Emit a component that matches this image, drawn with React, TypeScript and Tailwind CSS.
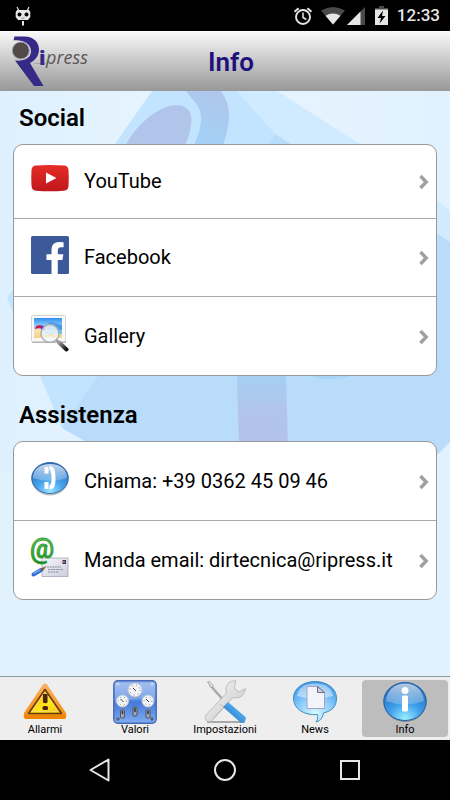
import { useState } from 'react';
import type { ReactNode } from 'react';
import { FaFacebookF } from 'react-icons/fa';

function StatusBar() {
    return (
        <div className="flex items-center justify-between h-[31px] pl-[15px] pr-[10px] bg-black text-[#e6e6e6]">
            <svg width="16" height="20" viewBox="0 0 16 20" className="mt-px" aria-hidden="true">
                <path d="M2 1l2 4M14 1l-2 4" stroke="#e6e6e6" strokeWidth="1.2" />
                <path d="M2 4h12l1.3 2v5L13 14H3L.7 11V6z" fill="#e6e6e6" />
                <circle cx="4.5" cy="8.5" r="2" fill="#000" />
                <circle cx="11.5" cy="8.5" r="2" fill="#000" />
                <path d="M6.5 12.2h3" stroke="#888" />
                <path d="M8 15v4.500" stroke="#e6e6e6" strokeWidth="2" />
            </svg>
            <div className="flex items-center">
                <svg width="20" height="20" viewBox="0 0 20 20" fill="none" stroke="#e6e6e6" aria-hidden="true">
                    <circle cx="10" cy="11" r="7" strokeWidth="1.900" />
                    <path d="M10 6.500V11.500l3.300 2" strokeWidth="1.500" />
                    <path d="M1.500 5.800L5.600 2.200M18.500 5.800l-4.100-3.600" strokeWidth="1.900" />
                </svg>
                <svg width="24" height="18" viewBox="0 0 24 18" className="ml-2" aria-hidden="true">
                    <path d="M12 17.500L0 3.500Q12-3.500 24 3.500z" fill="#4a4a4a" />
                    <path d="M12 17.500L4.500 8.800Q12 4 19.500 8.800z" fill="#e6e6e6" />
                </svg>
                <svg width="18" height="18" viewBox="0 0 18 18" className="ml-[2px]" aria-hidden="true">
                    <path d="M0 18L18 0v18z" fill="#4a4a4a" />
                    <path d="M0 18L13.500 4.500V18z" fill="#e6e6e6" />
                </svg>
                <svg width="13" height="19" viewBox="0 0 13 19" className="ml-[10px]" aria-hidden="true">
                    <path d="M4 0h5v2h4v3H0V2h4z" fill="#4a4a4a" />
                    <path d="M0 3.500h13V19H0z" fill="#e6e6e6" />
                    <path d="M8 4.500L2.500 12H6l-1.500 5.500L10.500 10H7z" fill="#000" />
                </svg>
                <span className="ml-[9px] text-[17px] leading-[31px] font-medium">12:33</span>
            </div>
        </div>
    );
}

function Logo() {
    return (
        <svg width="80" height="52" viewBox="0 0 80 52" role="img" aria-label="Ripress">
            <path
                d="M2.500.5H12C22.500.5 27 7 27 13.500C27 20 23 24.500 18 27L31.500 50H22L3 24.500C12 25.500 19.500 22 19 14.500C18.500 7.500 10.500 3.500 1.500 4.500z"
                fill="#352a86"
            />
            <circle cx="8.800" cy="14.500" r="8.500" fill="#514a49" stroke="#a4a0b5" strokeWidth="1" />
            <path d="M22 27.500h12" stroke="#a9a6b4" />
            <text x="27" y="29" fontSize="20" fontWeight="800" fill="#352a86" fontFamily="Open Sans, sans-serif">i</text>
            <text x="34" y="28" fontSize="18" fontStyle="italic" fontWeight="400" fill="#5b5655" fontFamily="Open Sans, sans-serif">press</text>
        </svg>
    );
}

function Backdrop() {
    return (
        <svg
            className="absolute inset-0 w-full h-full"
            viewBox="0 0 450 585"
            preserveAspectRatio="xMidYMin slice"
            aria-hidden="true"
        >
            <defs>
                <linearGradient id="sky" x1="0" y1="0" x2="1" y2="0">
                    <stop offset="0" stopColor="#def0fe" />
                    <stop offset=".4" stopColor="#e7f5ff" />
                    <stop offset="1" stopColor="#e1f1fe" />
                </linearGradient>
                <linearGradient id="violet" x1="0" y1="0" x2="0" y2="1">
                    <stop offset="0" stopColor="#a4cff3" />
                    <stop offset=".5" stopColor="#b2c4ea" />
                    <stop offset="1" stopColor="#b1c3e9" />
                </linearGradient>
                <linearGradient id="ring" x1=".7" y1="0" x2=".3" y2="1">
                    <stop offset="0" stopColor="#b1c5eb" />
                    <stop offset=".8" stopColor="#a3d0f4" />
                </linearGradient>
            </defs>
            <path d="M0 0h450v585H0z" fill="#e1f1fe" />
            <path d="M0 0h450v380H0z" fill="url(#sky)" />
            <path d="M237 0h40l83 53 77 56 13 11v230H237z" fill="#d0ebff" />
            <path d="M152 0h85l38 43 62 307H85L62 337 40 285 7 207z" fill="#c2e4fe" />
            <path d="M98 285L268 54l7-11 162 100 13 8v200l-30 30H120L85 350 62 337z" fill="#b9dcfb" />
            <path d="M186 0h35q9 12 8 28-1 12-6 26h-29q7-14 7-26 0-8-4-14z" fill="url(#ring)" />
            <path d="M126 54C136 34 158 15 176 14c12 0 17 8 15 20q-1 10-6 20z" fill="#b1c4e9" />
            <path d="M237 285h49l2 70h-49z" fill="url(#violet)" />
            <ellipse cx="330" cy="280" rx="26" ry="8" fill="#a7d5f8" />
        </svg>
    );
}

function YoutubeIcon() {
    return (
        <svg width="38" height="38" viewBox="0 0 38 38" aria-hidden="true">
            <defs>
                <linearGradient id="yt" x1="0" y1="0" x2="0" y2="1">
                    <stop offset="0" stopColor="#e52d27" />
                    <stop offset="1" stopColor="#bf171d" />
                </linearGradient>
            </defs>
            <path d="M5 5.500Q19 4.500 33 5.500Q37 5.500 37.500 10Q38 18 37.500 26Q37 30.500 33 30.700Q19 31.700 5 30.700Q1 30.500.5 26Q0 18 .5 10Q1 5.500 5 5.500z" fill="url(#yt)" />
            <path d="M15 12.500l10.500 5.500L15 23.500z" fill="#fff" />
        </svg>
    );
}

function FacebookIcon() {
    return (
        <svg width="38" height="38" viewBox="0 0 38 38" aria-hidden="true">
            <rect width="38" height="38" rx="1.500" fill="#3c5a99" />
            <FaFacebookF x="8" y="6" size={32} color="#fff" />
        </svg>
    );
}

function GalleryIcon() {
    return (
        <svg width="38" height="38" viewBox="0 0 38 38" aria-hidden="true">
            <defs>
                <linearGradient id="photo" x1="0" y1="0" x2="0" y2="1">
                    <stop offset="0" stopColor="#2f8ff0" />
                    <stop offset=".45" stopColor="#9bd8fa" />
                    <stop offset=".6" stopColor="#f8e4b4" />
                    <stop offset="1" stopColor="#f7d083" />
                </linearGradient>
                <linearGradient id="handle" x1="0" y1="0" x2="1" y2="1">
                    <stop offset="0" stopColor="#9a9a9a" />
                    <stop offset="1" stopColor="#111" />
                </linearGradient>
            </defs>
            <rect x="1" y="2" width="34" height="26" rx="1" fill="#b5b5b5" />
            <rect x=".5" y=".5" width="34" height="26" rx="1" fill="#fafafa" stroke="#d4d4d4" />
            <rect x="3" y="3" width="28" height="20" fill="url(#photo)" />
            <path d="M16 10c3-4 6-3 8-2s4 1 7 2v5H16z" fill="#4b9ce8" />
            <path d="M13 15h18v4H13z" fill="#72c5f3" />
            <path d="M4 14c0-3 3-4.500 6-3.500s4 2 3 4.500c-3-2-6-2-9-1z" fill="#dc1745" />
            <path d="M10 10.500c4 0 6 3 4 5l-4-1z" fill="#6128b4" />
            <circle cx="19" cy="18.500" r="9" fill="#f4f8f9" fillOpacity=".8" stroke="#a9adb0" strokeWidth="1.400" />
            <path d="M14 22q5-5 10 0" stroke="#f6d9a0" fill="none" />
            <path d="M25.500 25l3 3" stroke="#8c8c8c" strokeWidth="2" />
            <path d="M28 27.500l7.500 7" stroke="url(#handle)" strokeWidth="4" strokeLinecap="round" />
        </svg>
    );
}

function PhoneIcon() {
    return (
        <svg width="38" height="38" viewBox="0 0 38 38" aria-hidden="true">
            <defs>
                <radialGradient id="orb" cx=".5" cy=".95" r=".9">
                    <stop offset="0" stopColor="#9ee6ff" />
                    <stop offset=".4" stopColor="#4aa6ee" />
                    <stop offset="1" stopColor="#2368b8" />
                </radialGradient>
                <linearGradient id="gloss" x1="0" y1="0" x2="0" y2="1">
                    <stop offset="0" stopColor="#fff" stopOpacity=".75" />
                    <stop offset="1" stopColor="#fff" stopOpacity=".2" />
                </linearGradient>
            </defs>
            <ellipse cx="19" cy="19.500" rx="18.500" ry="16" fill="#b8bfc8" />
            <ellipse cx="19" cy="18" rx="18.300" ry="15.500" fill="url(#orb)" stroke="#2a5c9d" strokeWidth=".8" />
            <path d="M2 18C2 9 9 4 19 4s17 5 17 14q-17 6-34 0z" fill="url(#gloss)" />
            <path d="M13.500 7h4v6.500h-4zM18.500 6c5 0 6 5 6 12s-1 11.500-6 11.500v-4c1.500-.5 2-3 2-7.500s-.5-7.500-2-8zM13.500 22h4v7h-4z" fill="#fff" />
        </svg>
    );
}

function MailIcon() {
    return (
        <svg width="38" height="38" viewBox="0 0 38 38" className="overflow-visible" aria-hidden="true">
            <defs>
                <linearGradient id="card" x1="0" y1="0" x2="1" y2="1">
                    <stop offset="0" stopColor="#f6f6fb" />
                    <stop offset="1" stopColor="#cbcddd" />
                </linearGradient>
                <linearGradient id="leaf" x1="0" y1="0" x2="0" y2="1">
                    <stop offset="0" stopColor="#7bd05f" />
                    <stop offset="1" stopColor="#138a1f" />
                </linearGradient>
            </defs>
            <rect x="11" y="19" width="26" height="18.500" fill="url(#card)" stroke="#a5a7b6" strokeWidth=".8" />
            <rect x="31.500" y="21" width="3.500" height="4" fill="#26367c" />
            <rect x="32" y="22" width="2" height="2" fill="#e2612c" />
            <path d="M16 28h14M17 30.500h15M17 33h11" stroke="#77798a" strokeWidth=".8" strokeDasharray="2 .6" />
            <path d="M2.500 35.500L10 31" stroke="#2c6cd4" strokeWidth="4" strokeLinecap="round" />
            <path d="M3 34.500L9 31" stroke="#7fb5f5" strokeWidth="1.200" strokeLinecap="round" />
            <path d="M9.500 29.500l6-2.500-3.500 5z" fill="#8a5b3b" />
            <text x="-1" y="19" fontSize="27" fontWeight="500" fill="url(#leaf)" stroke="#2f9c35" strokeWidth=".8" fontFamily="Roboto, sans-serif">@</text>
        </svg>
    );
}

function AlarmIcon() {
    return (
        <svg width="44" height="44" viewBox="0 0 44 44" aria-hidden="true">
            <defs>
                <linearGradient id="warn" x1="0" y1="0" x2="0" y2="1">
                    <stop offset="0" stopColor="#fbb062" />
                    <stop offset="1" stopColor="#f58a07" />
                </linearGradient>
                <linearGradient id="warnIn" x1="0" y1="0" x2="1" y2="1">
                    <stop offset="0" stopColor="#f6a21e" />
                    <stop offset=".6" stopColor="#ffe818" />
                    <stop offset="1" stopColor="#f3c00e" />
                </linearGradient>
            </defs>
            <path d="M20 4.500q2-2 4 0L43 33q1 6-2 6H3q-3 0-2-6z" fill="url(#warn)" />
            <path d="M1.500 35h41q0 4-2 4h-37q-2 0-2-4z" fill="#ee8508" />
            <path d="M22 9.500L38.500 33.500h-33z" fill="url(#warnIn)" stroke="#653c0b" strokeWidth="1.600" strokeLinejoin="round" />
            <path d="M22 12l13 19.500H9z" fill="none" stroke="#fbd77b" strokeWidth=".8" />
            <path d="M20 14h4.500v8.500q-2 1.500-4.500 0z" fill="#4c220c" />
            <rect x="19.500" y="26" width="5.500" height="4" rx="1.500" fill="#4c220c" />
        </svg>
    );
}

function Gauge({ x, y, r }: { x: number; y: number; r: number }) {
    return (
        <g>
            <circle cx={x} cy={y + 1} r={r} fill="#6f86ad" />
            <circle cx={x} cy={y} r={r} fill="#f1f3f6" stroke="#bcc7d6" />
            <circle cx={x} cy={y} r={r - 2} fill="none" stroke="#81858d" strokeWidth="1" strokeDasharray="1 3" />
            <path d={`M${x - 2} ${y - 2}l3 3`} stroke="#444" />
        </g>
    );
}

function ValuesIcon() {
    return (
        <svg width="44" height="44" viewBox="0 0 44 44" aria-hidden="true">
            <defs>
                <linearGradient id="panel" x1="0" y1="0" x2="0" y2="1">
                    <stop offset="0" stopColor="#90b3ef" />
                    <stop offset=".45" stopColor="#5d8fe5" />
                    <stop offset=".5" stopColor="#4479d8" />
                    <stop offset="1" stopColor="#80adf2" />
                </linearGradient>
            </defs>
            <rect x=".8" y=".8" width="42.400" height="42.400" rx="4" fill="url(#panel)" stroke="#4569b4" strokeWidth="1.400" />
            <path d="M2 3h40v16Q20 17 2 23z" fill="#fff" fillOpacity=".2" />
            <Gauge x={22} y={10} r={7} />
            <Gauge x={9.5} y={21} r={6} />
            <Gauge x={35} y={21} r={6} />
            <g fill="#a3a6ac" stroke="#4c5468">
                <rect x="7.500" y="30" width="4" height="8" rx="1" />
                <rect x="20" y="27" width="4" height="9" rx="1" />
                <rect x="33" y="30" width="4" height="8" rx="1" />
            </g>
            <path d="M9.500 31v3M22 28v4M35 31v3" stroke="#333" strokeWidth="1.500" />
            <g fill="#c9d5ec">
                <circle cx="5" cy="4" r="1.500" />
                <circle cx="39" cy="4" r="1.500" />
            </g>
            <circle cx="5" cy="39" r="1.800" fill="#59657e" />
            <circle cx="39" cy="39" r="1.800" fill="#59657e" />
        </svg>
    );
}

function ToolsIcon() {
    return (
        <svg width="44" height="44" viewBox="0 0 44 44" aria-hidden="true">
            <defs>
                <linearGradient id="steel" x1="0" y1="0" x2="1" y2="1">
                    <stop offset="0" stopColor="#f8f8f8" />
                    <stop offset="1" stopColor="#c4c4c4" />
                </linearGradient>
                <linearGradient id="grip" x1="0" y1="1" x2="1" y2="0">
                    <stop offset="0" stopColor="#1560aa" />
                    <stop offset=".6" stopColor="#4da5ea" />
                    <stop offset="1" stopColor="#2173bd" />
                </linearGradient>
            </defs>
            <path d="M4 42h38" stroke="#a9a9a9" strokeWidth="2" />
            <path d="M7 5l15 17" stroke="#a9a9a9" strokeWidth="2.500" />
            <path d="M4.500 2l2-.5 4 4.500-2 2z" fill="#e3e3e3" stroke="#9a9a9a" strokeWidth=".8" />
            <path
                d="M33 1C27-.5 21 6 23.500 13L3 35c-2 3 0 7 4 6.500 2 0 3-1.500 4-3L30 17.500c6 2 12-2 12.500-9L36 12l-5-4z"
                fill="url(#steel)"
                stroke="#b4b4b4"
                strokeWidth=".8"
            />
            <path d="M17 24l3.500 3.500-9.500 10" fill="none" stroke="#bcbcbc" />
            <path d="M20 27l5-5 17.500 15q1 3-1.500 5t-4 0z" fill="url(#grip)" />
        </svg>
    );
}

function NewsIcon() {
    return (
        <svg width="44" height="44" viewBox="0 0 44 44" aria-hidden="true">
            <defs>
                <radialGradient id="bubble" cx=".5" cy=".8" r=".8">
                    <stop offset="0" stopColor="#d9fbff" />
                    <stop offset=".55" stopColor="#87c7fb" />
                    <stop offset="1" stopColor="#3e96e6" />
                </radialGradient>
            </defs>
            <path
                d="M22 1.500C34 1.500 43.500 8.500 43.500 18c0 9-5 13-13 15-1 4-1.500 7-7.500 9 2-3 2-5 1.500-7.500C11 35.500.5 29 .5 18 .5 8.500 10 1.500 22 1.500z"
                fill="url(#bubble)"
                stroke="#3f8fc3"
            />
            <path d="M4 16C5 8 12 3.500 22 3.500S39 8 40 16q-18 5-36 0z" fill="#fff" fillOpacity=".45" />
            <path d="M14 6.500h10.500l7 6V28.500H14z" fill="#f3f3fa" stroke="#a3a1c6" />
            <path d="M24.500 6.500v6h7z" fill="#d1d0e3" stroke="#6d6c8c" />
        </svg>
    );
}

function InfoIcon() {
    return (
        <svg width="44" height="44" viewBox="0 0 44 44" aria-hidden="true">
            <defs>
                <radialGradient id="infoOrb" cx=".5" cy=".95" r=".9">
                    <stop offset="0" stopColor="#9af0ff" />
                    <stop offset=".45" stopColor="#3f9de9" />
                    <stop offset="1" stopColor="#2267b5" />
                </radialGradient>
                <linearGradient id="infoGloss" x1="0" y1="0" x2="0" y2="1">
                    <stop offset="0" stopColor="#fff" stopOpacity=".65" />
                    <stop offset="1" stopColor="#fff" stopOpacity=".2" />
                </linearGradient>
            </defs>
            <ellipse cx="22" cy="23" rx="21" ry="19" fill="#7f8b99" />
            <ellipse cx="22" cy="21.500" rx="21.300" ry="19" fill="url(#infoOrb)" stroke="#2661a4" />
            <path d="M3 21C4 10 11 3.500 22 3.500S40 10 41 21q-19 7-38 0z" fill="url(#infoGloss)" />
            <circle cx="22" cy="10.500" r="3.500" fill="#fff" />
            <rect x="19" y="15.500" width="6" height="16" rx="1.500" fill="#fff" />
        </svg>
    );
}

function Chevron() {
    return (
        <svg width="10" height="16" viewBox="0 0 10 16" className="shrink-0 mt-[2px]" aria-hidden="true">
            <path d="M1.500 2l5.700 6-5.700 6" fill="none" stroke="#a0a0a0" strokeWidth="3.400" />
        </svg>
    );
}

function Row({ href, icon, label, className }: { href: string; icon: ReactNode; label: string; className: string }) {
    return (
        <li className={`border-[#a8a8a8] not-last:border-b ${className}`}>
            <a href={href} className="flex items-center h-full pl-[17px] pr-[7px]">
                <span className="shrink-0 mb-[4px]">{icon}</span>
                <span className="flex-1 ml-[15px] text-[20px] leading-6 whitespace-nowrap">{label}</span>
                <Chevron />
            </a>
        </li>
    );
}

const tabs = [
    { id: 'allarmi', label: 'Allarmi', icon: <AlarmIcon /> },
    { id: 'valori', label: 'Valori', icon: <ValuesIcon /> },
    { id: 'impostazioni', label: 'Impostazioni', icon: <ToolsIcon /> },
    { id: 'news', label: 'News', icon: <NewsIcon /> },
    { id: 'info', label: 'Info', icon: <InfoIcon /> },
];

export default function App() {
    const [active, setActive] = useState('info');

    return (
        <div className="flex flex-col min-h-screen bg-black font-['Roboto',sans-serif] text-black">
            <StatusBar />

            <header className="grid grid-cols-[1fr_auto_1fr] items-center h-[60px] pt-[2px] pl-3 pr-3 bg-linear-to-b from-[#fbfbfb] to-[#989898]">
                <Logo />
                <h1 className="ml-3 text-[26px] leading-8 font-semibold text-[#20107c]">Info</h1>
            </header>

            <main className="relative flex-1 overflow-hidden bg-[#e1f1fe]">
                <Backdrop />
                <div className="relative px-[13px] pt-[13px]">
                    <section>
                        <h2 className="ml-[6px] mb-3 text-[24px] leading-7 font-semibold">Social</h2>
                        <ul className="rounded-[10px] border border-[#999] bg-white">
                            <Row href="#youtube" icon={<YoutubeIcon />} label="YouTube" className="h-[74px] pb-[2px]" />
                            <Row href="#facebook" icon={<FacebookIcon />} label="Facebook" className="h-[78px] pb-[2px]" />
                            <Row href="#gallery" icon={<GalleryIcon />} label="Gallery" className="h-[78px]" />
                        </ul>
                    </section>
                    <section className="mt-[25px]">
                        <h2 className="ml-[6px] mb-3 text-[24px] leading-7 font-semibold">Assistenza</h2>
                        <ul className="rounded-[10px] border border-[#999] bg-white">
                            <Row href="tel:+390362450946" icon={<PhoneIcon />} label="Chiama: +39 0362 45 09 46" className="h-[79px]" />
                            <Row href="mailto:dirtecnica@ripress.it" icon={<MailIcon />} label="Manda email: dirtecnica@ripress.it" className="h-[78px]" />
                        </ul>
                    </section>
                </div>
            </main>

            <nav className="grid grid-cols-5 h-16 border-t border-[#8d9ba3] bg-[#eee]">
                {tabs.map((tab) => (
                    <button
                        key={tab.id}
                        type="button"
                        aria-current={active === tab.id ? 'page' : undefined}
                        onClick={() => setActive(tab.id)}
                        className={`flex flex-col items-center mx-[2px] mt-[3px] mb-[3px] rounded ${active === tab.id ? 'bg-[#bdbdbd]' : ''}`}
                    >
                        {tab.icon}
                        <span className="text-[11px] leading-3">{tab.label}</span>
                    </button>
                ))}
            </nav>

            <div className="flex items-center justify-center gap-[101px] h-[60px] bg-black">
                <button type="button" aria-label="Back">
                    <svg width="24" height="24" viewBox="0 0 24 24" fill="none" stroke="#e6e6e6" strokeWidth="2">
                        <path d="M20.500 1.500v21L2.500 12z" strokeLinejoin="round" />
                    </svg>
                </button>
                <button type="button" aria-label="Home">
                    <svg width="24" height="24" viewBox="0 0 24 24" fill="none" stroke="#e6e6e6" strokeWidth="2">
                        <circle cx="12" cy="12" r="10" />
                    </svg>
                </button>
                <button type="button" aria-label="Recent apps">
                    <svg width="24" height="24" viewBox="0 0 24 24" fill="none" stroke="#e6e6e6" strokeWidth="2">
                        <rect x="3" y="3" width="18" height="18" />
                    </svg>
                </button>
            </div>
        </div>
    );
}
